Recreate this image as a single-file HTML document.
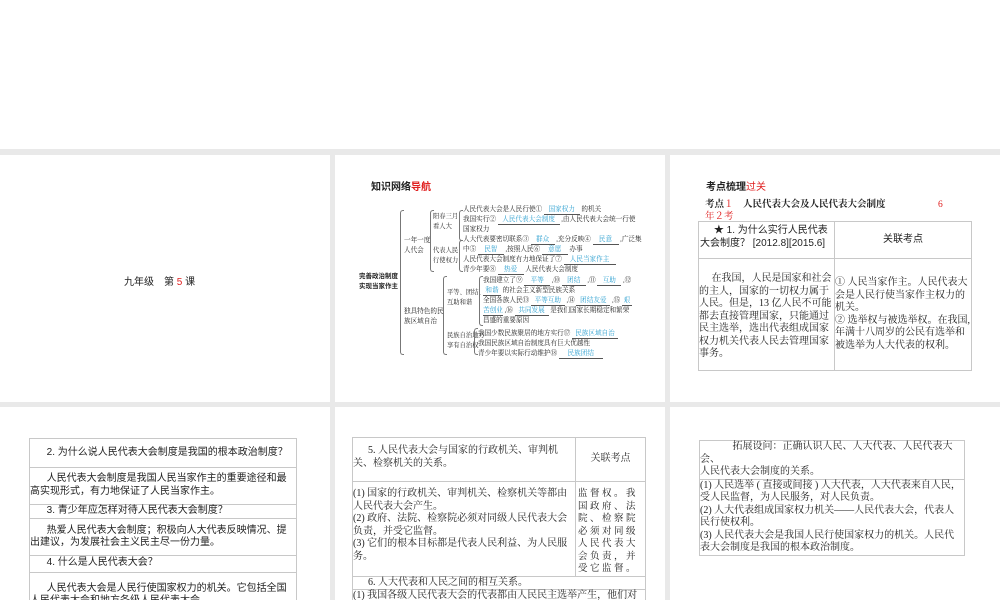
<!DOCTYPE html>
<html><head><meta charset="utf-8"><style>
*{margin:0;padding:0;box-sizing:border-box}
html,body{width:1000px;height:600px;overflow:hidden}
body{background:#e9e9e9;position:relative;font-family:"Liberation Serif","Noto Serif CJK SC",serif;color:#222}
.s{position:absolute;background:#fff;overflow:hidden}
.a{position:absolute;white-space:nowrap}
.m{font-size:6.6px;line-height:10px}
.u{color:#2a9fd0;border-bottom:0.8px solid #555;display:inline-block;text-align:center;line-height:8px}
.r{color:#e02020}
table{border-collapse:collapse;position:absolute;font-size:10px;line-height:12.5px}
td{border:1px solid #c8c8c8;vertical-align:top;padding:0}
.br{position:absolute;border-left:1px solid #777;border-top:1px solid #777;border-bottom:1px solid #777;width:4px;border-radius:3px 0 0 3px}
</style></head><body>
<div class="s" style="left:0;top:0;width:1000px;height:149px"></div>
<div class="s" style="left:0;top:155px;width:330px;height:247px">
<div class="a" style="left:124px;top:118px;font-size:10px;font-family:'Liberation Sans','Noto Sans CJK SC',sans-serif">九年级　第 <span class="r">5</span> 课</div>
</div>

<div class="s" style="left:335px;top:155px;width:330px;height:247px"></div>
<div class="a" style="left:371px;top:178px;font-size:10px;font-weight:bold;font-family:'Liberation Sans','Noto Sans CJK SC',sans-serif">知识网络<span class="r">导航</span></div>
<div class="a" style="left:359px;top:272px;font-size:6.5px;line-height:10px;font-weight:bold;font-family:'Liberation Sans','Noto Sans CJK SC',sans-serif">完善政治制度<br>实现当家作主</div>
<div class="br" style="left:400px;top:210px;height:145px"></div>
<div class="a m" style="left:404px;top:236px">一年一度<br>人代会</div>
<div class="a m" style="left:404px;top:307px">独具特色的民<br>族区域自治</div>
<div class="br" style="left:430px;top:210px;height:62px"></div>
<div class="a" style="left:433px;top:212px;font-size:6.3px;line-height:10px">阳春三月<br>看人大</div>
<div class="a" style="left:433px;top:246px;font-size:6.3px;line-height:10px">代表人民<br>行使权力</div>
<div class="br" style="left:459px;top:210px;height:31px"></div>
<div class="br" style="left:459px;top:240px;height:32px"></div>
<div class="a m" style="left:463px;top:205px">人民代表大会是人民行使① <span class="u" style="width:36px">国家权力</span> 的机关</div>
<div class="a m" style="left:463px;top:215px">我国实行② <span class="u" style="width:62px">人民代表大会制度</span> ,由人民代表大会统一行使</div>
<div class="a m" style="left:463px;top:225px">国家权力</div>
<div class="a m" style="left:463px;top:235px">人大代表要密切联系③ <span class="u" style="width:24px">群众</span> ,充分反映④ <span class="u" style="width:26px">民意</span> ,广泛集</div>
<div class="a m" style="left:463px;top:245px">中⑤ <span class="u" style="width:26px">民智</span> ,按照人民⑥ <span class="u" style="width:26px">意愿</span> 办事</div>
<div class="a m" style="left:463px;top:255px">人民代表大会制度有力地保证了⑦ <span class="u" style="width:52px">人民当家作主</span></div>
<div class="a m" style="left:463px;top:265px">青少年要⑧ <span class="u" style="width:26px">热爱</span> 人民代表大会制度</div>
<div class="br" style="left:443px;top:276px;height:79px"></div>
<div class="a" style="left:447px;top:288px;font-size:6.3px;line-height:10px">平等、团结、<br>互助和谐</div>
<div class="a" style="left:447px;top:331px;font-size:6.3px;line-height:10px">民族自治地方<br>享有自治权</div>
<div class="br" style="left:479px;top:276px;height:50px"></div>
<div class="br" style="left:474px;top:328px;height:27px"></div>
<div class="a m" style="left:483px;top:276px">我国建立了⑨ <span class="u" style="width:26px">平等</span> ,⑩ <span class="u" style="width:24px">团结</span> ,⑪ <span class="u" style="width:24px">互助</span> ,⑫</div>
<div class="a m" style="left:483px;top:286px"><span class="u" style="width:18px">和谐</span> 的社会主义新型民族关系</div>
<div class="a m" style="left:483px;top:296px">全国各族人民⑬ <span class="u" style="width:34px">平等互助</span> ,⑭ <span class="u" style="width:34px">团结友爱</span> ,⑮ <span class="u" style="width:10px">艰</span></div>
<div class="a m" style="left:483px;top:306px"><span class="u" style="width:20px">苦创业</span> ,⑯ <span class="u" style="width:34px">共同发展</span> 是我们国家长期稳定和繁荣</div>
<div class="a m" style="left:483px;top:316px">昌盛的重要原因</div>
<div class="a m" style="left:478px;top:329px">我国少数民族聚居的地方实行⑰ <span class="u" style="width:46px">民族区域自治</span></div>
<div class="a m" style="left:478px;top:339px">我国民族区域自治制度具有巨大优越性</div>
<div class="a m" style="left:478px;top:349px">青少年要以实际行动维护⑱ <span class="u" style="width:44px">民族团结</span></div>

<div class="s" style="left:670px;top:155px;width:330px;height:247px">
<div class="a" style="left:36px;top:23px;font-size:10px;font-weight:bold;font-family:'Liberation Sans','Noto Sans CJK SC',sans-serif">考点梳理<span class="r" style="font-weight:normal">过关</span></div>
<div class="a" style="left:35px;top:44px;font-size:9.5px;line-height:12px;font-weight:bold">考点<span class="r" style="font-weight:normal">１</span>　人民代表大会及人民代表大会制度<span class="r" style="position:absolute;left:233px;font-weight:normal">6</span><br><span class="r" style="font-weight:normal">年２考</span></div>
<table style="left:28px;top:66px;width:274px">
<tr style="height:37px"><td style="width:136px;padding:3px 1px 0 1px;font-family:'Liberation Sans','Noto Sans CJK SC',sans-serif">&nbsp;&nbsp;&nbsp;&nbsp;&nbsp;★ 1. 为什么实行人民代表大会制度？ [2012.8][2015.6]</td><td style="text-align:center;vertical-align:middle;font-family:'Liberation Sans','Noto Sans CJK SC',sans-serif">关联考点</td></tr>
<tr style="height:112px"><td style="padding-top:14px">&nbsp;&nbsp;&nbsp;&nbsp;&nbsp;在我国，人民是国家和社会的主人，国家的一切权力属于人民。但是，13 亿人民不可能都去直接管理国家，只能通过民主选举，选出代表组成国家权力机关代表人民去管理国家事务。</td><td style="padding-top:18px">① 人民当家作主。人民代表大会是人民行使当家作主权力的机关。<br>② 选举权与被选举权。在我国,年满十八周岁的公民有选举和被选举为人大代表的权利。</td></tr>
</table>
</div>

<div class="s" style="left:0;top:407px;width:330px;height:193px">
<table style="left:29px;top:31px;width:268px;font-family:'Liberation Sans','Noto Sans CJK SC',sans-serif">
<tr style="height:29px"><td style="vertical-align:middle">&nbsp;&nbsp;&nbsp;&nbsp;&nbsp;&nbsp;2. 为什么说人民代表大会制度是我国的根本政治制度？</td></tr>
<tr style="height:37px"><td style="padding-top:5px">&nbsp;&nbsp;&nbsp;&nbsp;&nbsp;&nbsp;人民代表大会制度是我国人民当家作主的重要途径和最高实现形式，有力地保证了人民当家作主。</td></tr>
<tr style="height:13px"><td>&nbsp;&nbsp;&nbsp;&nbsp;&nbsp;&nbsp;3. 青少年应怎样对待人民代表大会制度？</td></tr>
<tr style="height:37px"><td style="padding-top:6px">&nbsp;&nbsp;&nbsp;&nbsp;&nbsp;&nbsp;热爱人民代表大会制度；积极向人大代表反映情况、提出建议，为发展社会主义民主尽一份力量。</td></tr>
<tr style="height:17px"><td style="vertical-align:middle">&nbsp;&nbsp;&nbsp;&nbsp;&nbsp;&nbsp;4. 什么是人民代表大会？</td></tr>
<tr style="height:40px"><td style="padding-top:10px">&nbsp;&nbsp;&nbsp;&nbsp;&nbsp;&nbsp;人民代表大会是人民行使国家权力的机关。它包括全国人民代表大会和地方各级人民代表大会。</td></tr>
</table>
</div>

<div class="s" style="left:335px;top:407px;width:330px;height:193px">
<table style="left:17px;top:30px;width:294px">
<tr style="height:44px"><td style="width:223px;padding-top:7px">&nbsp;&nbsp;&nbsp;&nbsp;&nbsp;&nbsp;5. 人民代表大会与国家的行政机关、审判机关、检察机关的关系。</td><td style="text-align:center;vertical-align:middle">关联考点</td></tr>
<tr style="height:87px"><td style="padding-top:6px">(1) 国家的行政机关、审判机关、检察机关等都由人民代表大会产生。<br>(2) 政府、法院、检察院必须对同级人民代表大会负责，并受它监督。<br>(3) 它们的根本目标都是代表人民利益、为人民服务。</td><td style="padding:6px 0 0 2px;letter-spacing:2.5px;font-size:9.5px">监督权。我国政府、法院、检察院必须对同级人民代表大会负责，并受它监督。</td></tr>
<tr style="height:13px"><td colspan="2">&nbsp;&nbsp;&nbsp;&nbsp;&nbsp;&nbsp;6. 人大代表和人民之间的相互关系。</td></tr>
<tr style="height:20px"><td colspan="2">(1) 我国各级人民代表大会的代表都由人民民主选举产生，他们对</td></tr>
</table>
</div>

<div class="s" style="left:670px;top:407px;width:330px;height:193px">
<table style="left:29px;top:33px;width:266px">
<tr style="height:38px"><td>&nbsp;&nbsp;&nbsp;&nbsp;&nbsp;&nbsp;&nbsp;&nbsp;&nbsp;&nbsp;&nbsp;&nbsp;&nbsp;拓展设问：正确认识人民、人大代表、人民代表大会、<br>人民代表大会制度的关系。</td></tr>
<tr style="height:73px"><td>(1) 人民选举 ( 直接或间接 ) 人大代表，人大代表来自人民，受人民监督，为人民服务，对人民负责。<br>(2) 人大代表组成国家权力机关——人民代表大会，代表人民行使权利。<br>(3) 人民代表大会是我国人民行使国家权力的机关。人民代表大会制度是我国的根本政治制度。</td></tr>
</table>
</div>
</body></html>
